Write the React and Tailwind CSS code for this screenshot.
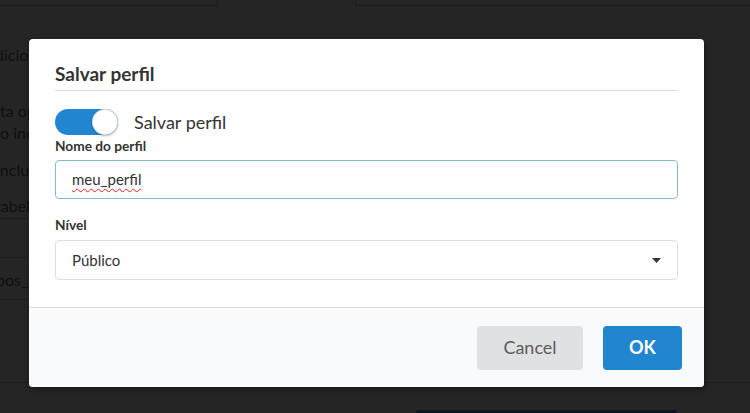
import React from 'react';

const bgText = [
  { text: 'dicional', top: 'mt-[38px]', ml: '-ml-[5px]' },
  { text: 'ta opção', top: 'mt-[35px]', ml: 'ml-0' },
  { text: 'o incluir', top: 'mt-[1px]', ml: 'ml-0' },
  { text: 'incluir', top: 'mt-[16px]', ml: '-ml-[4px]' },
  { text: 'tabela', top: 'mt-[15px]', ml: '-ml-[5px]' },
];

function Toggle() {
  return (
    <div className="relative h-[26px] w-[63px] rounded-full bg-[#2185d0]">
      <div className="absolute right-0 top-0 h-[26px] w-[26px] rounded-full bg-white shadow-[0_1px_2px_rgba(34,36,38,0.35),inset_0_0_0_1px_rgba(34,36,38,0.15)]" />
    </div>
  );
}

export default function App() {
  return (
    <div className="relative h-[413px] w-[750px] overflow-hidden bg-[#252525] font-['Lato','Noto_Sans',sans-serif]">
      {/* dimmed page behind */}
      <div className="flex h-[6px]">
        <div className="w-[218px] border-b border-r border-[#1c1c1c]" />
        <div className="w-[137px]" />
        <div className="flex-1 border-b border-l border-[#1c1c1c]" />
      </div>
      <div className="flex w-[29px] flex-col overflow-hidden text-[16px] leading-[21px] text-[#101010]">
        {bgText.map((t) => (
          <p key={t.text} className={`${t.top} ${t.ml} whitespace-nowrap`}>{t.text}</p>
        ))}
        <div className="mt-[2px] h-px w-[40px] bg-[#1c1c1c]" />
        <div className="mt-[38px] h-px w-[40px] bg-[#1c1c1c]" />
        <p className="mt-[11px] -ml-[4px] whitespace-nowrap">pos_ap</p>
        <div className="mt-[9px] h-px w-[40px] bg-[#1c1c1c]" />
      </div>
      <div className="absolute bottom-[30px] left-0 right-0 h-px bg-[#1c1c1c]" />
      <div className="absolute bottom-0 left-[416px] h-[3px] w-[261px] rounded-t bg-[#0b1620]" />

      {/* modal */}
      <div className="absolute left-[29px] top-[39px] w-[675px] overflow-hidden rounded-[4px] bg-white shadow-[1px_3px_6px_rgba(0,0,0,0.35)]">
        <div className="px-[26px] pt-[24px]">
          <h2 className="border-b border-[#dcdcdc] pb-[5px] text-[19px] font-bold leading-[22px] text-[#333]">Salvar perfil</h2>
          <div className="mt-[18px] flex items-center gap-[16px]">
            <Toggle />
            <span className="text-[18px] leading-[22px] text-[#333]">Salvar perfil</span>
          </div>
          <label className="mt-[3px] block text-[13.7px] font-bold leading-[16px] text-[#333]">Nome do perfil</label>
          <div className="mt-[6px] flex h-[39px] items-center rounded-[4px] border border-[#85b7d9] px-[16px] text-[15px] text-[#333]">
            <span className="underline decoration-wavy decoration-[#e02020] decoration-1 underline-offset-[3px]">meu_perfil</span>
          </div>
          <label className="mt-[18px] block text-[13.7px] font-bold leading-[16px] text-[#333]">Nível</label>
          <div className="mt-[7px] flex h-[40px] items-center justify-between rounded-[4px] border border-[#dedede] pl-[16px] pr-[16px] text-[15px] text-[#333]">
            <span>Público</span>
            <svg width="9" height="5" viewBox="0 0 9 5"><path d="M0 0h9L4.5 5z" fill="#333" /></svg>
          </div>
        </div>
        <div className="mt-[27px] flex h-[80px] items-center justify-end gap-[20px] border-t border-[#dcdcdc] bg-[#f9fafb] pr-[22px]">
          <button className="h-[44px] w-[106px] rounded-[4px] bg-[#e0e1e2] text-[18px] text-[#5a5a5a]">Cancel</button>
          <button className="h-[44px] w-[79px] rounded-[4px] bg-[#2185d0] text-[18px] font-bold text-white">OK</button>
        </div>
      </div>
    </div>
  );
}
